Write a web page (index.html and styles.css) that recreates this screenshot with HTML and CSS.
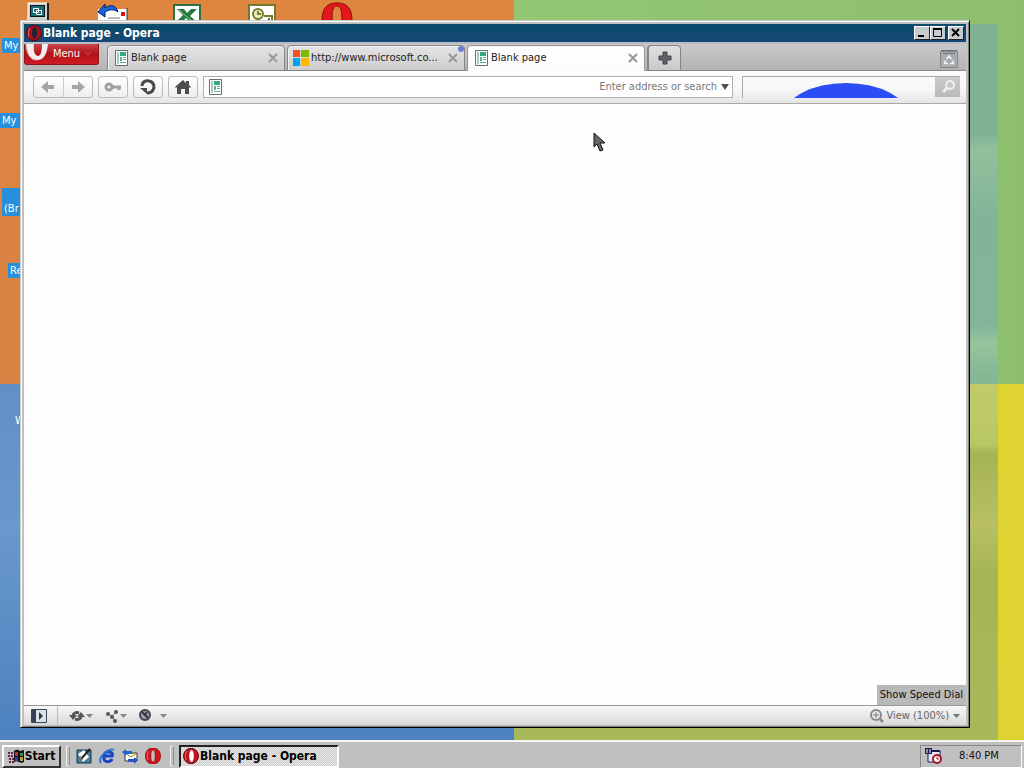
FILE: index.html
```html
<!DOCTYPE html>
<html lang="en">
<head>
    <meta charset="UTF-8">
    <meta name="viewport" content="width=device-width, initial-scale=1.0">
    <title>Blank page - Opera</title>
    <link rel="stylesheet" href="styles.css">
</head>
<body>
    <!-- Shared icons -->
    <svg class="sprite" aria-hidden="true">
        <symbol id="page" viewBox="0 0 13 16">
            <path d="M.5.5h12v15H.5z" fill="#fff" stroke="#60706c"/>
            <path d="M2 2h2v12H2z" fill="#a9c9be"/>
            <path d="M5 2h6v4H5z" fill="#35a68a"/>
            <path d="M5 7h2v4H5zM8 7h3v1H8zM8 9h3v1H8zM5 12h6v1H5z" fill="#5dae98"/>
        </symbol>
        <symbol id="opera" viewBox="0 0 16 16">
            <path fill-rule="evenodd" d="M8 0c5 0 7.500 3.500 7.500 8S13 16 8 16 .5 12.500.5 8 3 0 8 0zM8 2C6.300 2 5.800 4 5.800 8S6.300 14 8 14s2.200-2 2.200-6S9.700 2 8 2z" fill="#d3141c" stroke="#7d0508" stroke-width=".7"/>
            <path d="M4 3C2 5 2 9 3 12" fill="none" stroke="#f46a6a"/>
        </symbol>
        <symbol id="opera-dark" viewBox="0 0 16 16">
            <ellipse cx="8" cy="8" rx="7.500" ry="7.700" fill="#a80f16" stroke="#5b080f"/>
            <ellipse cx="8.500" cy="8" rx="2.500" ry="6" fill="#1d2536"/>
            <path d="M4 3C2 6 2 9 3 12" fill="none" stroke="#ee6b70"/>
        </symbol>
        <symbol id="opera-task" viewBox="0 0 16 16">
            <ellipse cx="8" cy="8" rx="7.500" ry="7.700" fill="#c3141b" stroke="#6c0a0f"/>
            <ellipse cx="8.500" cy="8" rx="2.300" ry="6" fill="#fff"/>
            <path d="M4 3C2 6 2 9 3 12" fill="none" stroke="#ee6b70"/>
        </symbol>
        <symbol id="close" viewBox="0 0 10 10">
            <path d="M1 1l8 8M9 1L1 9" stroke="#999" stroke-width="2"/>
        </symbol>
    </svg>

    <main class="desktop">
        <svg class="shortcut" style="left:27px" width="22" height="21" viewBox="0 0 22 21">
            <path d="M1 3h20v18H1z" fill="#c9d3cf"/>
            <path d="M1 21V3h19" fill="none" stroke="#fff"/>
            <path d="M21 3v18" stroke="#222" stroke-width="2"/>
            <path d="M3 5h15v12H3z" fill="#111"/>
            <path d="M4 6h13v10H4z" fill="#176d76"/>
            <path d="M6.500 8.500h5v4h-5zM9.500 10.500h5v4h-5z" fill="#176d76" stroke="#fff"/>
        </svg>
        <svg class="shortcut" style="left:96px" width="32" height="21" viewBox="0 0 32 21">
            <path d="M2 9h29v12H2z" fill="#fff"/>
            <path d="M31 8v13" stroke="#333"/>
            <path d="M25 12h4v4h-4z" fill="#d21414"/>
            <path d="M12 18h12" stroke="#777"/>
            <path d="M2 12l7-8v4c6-4 11-3 13 4-4-3-8-3-13 0v5z" fill="#1768dd" stroke="#0a1970"/>
        </svg>
        <svg class="shortcut" style="left:173px" width="28" height="21" viewBox="0 0 28 21">
            <path d="M1 5h26v16H1z" fill="#fff" stroke="#2f7040" stroke-width="2"/>
            <path d="M4 9h7l3 4 4-4h6l-7 7 7 6h-7l-4-4-4 4H3l7-7z" fill="#267a3c"/>
            <path d="M6 10l14 12" stroke="#8fc79a"/>
        </svg>
        <svg class="shortcut" style="left:248px" width="28" height="21" viewBox="0 0 28 21">
            <path d="M1 5h26v16H1z" fill="#fff" stroke="#727929" stroke-width="2"/>
            <circle cx="10" cy="14" r="5" fill="#eff0c3" stroke="#777b2d" stroke-width="2"/>
            <path d="M10 11v3h3M16 16h8v5h-3v-3" fill="none" stroke="#777b2d" stroke-width="2"/>
        </svg>
        <svg class="shortcut" style="left:321px" width="32" height="21" viewBox="0 0 32 21">
            <path fill-rule="evenodd" d="M1 21C1 8 6 3 16 3s15 5 15 18zM11 21C11 10 12 6 16 6s5 4 5 15z" fill="#e5181b" stroke="#8c0d0d"/>
        </svg>

        <span class="label" style="left:2px;top:38px">My</span>
        <span class="label" style="left:0;top:113px">My</span>
        <span class="label two-line" style="left:2px;top:188px">(Br</span>
        <span class="label" style="left:8px;top:263px">Re</span>
        <span class="label plain" style="left:13px;top:413px">W</span>

        <section class="window">
            <header class="titlebar">
                <svg width="16" height="16"><use href="#opera-dark"/></svg>
                <h1>Blank page - Opera</h1>
                <button class="caption" aria-label="Minimize"><svg width="14" height="12"><path d="M3 9h6" stroke="#000" stroke-width="2"/></svg></button>
                <button class="caption" aria-label="Maximize"><svg width="14" height="12"><path d="M2.500 2v7.500h8V2M2 2.500h9M2 1.500h9" fill="none" stroke="#000"/></svg></button>
                <button class="caption last" aria-label="Close"><svg width="14" height="12"><path d="M3 2l7 7M10 2L3 9" stroke="#000" stroke-width="2"/></svg></button>
            </header>

            <nav class="tabbar">
                <button class="menu">
                    <svg width="24" height="18" viewBox="0 0 24 18">
                        <path d="M1 0C2 10 5 16 12 16 19 16 22 10 23 0h-6c0 7-1 12-4 12S8 7 9 0z" fill="#f5eeee"/>
                        <path d="M1 0C2 10 5 16 12 16" fill="none" stroke="#cdbcbc"/>
                    </svg>
                    <span>Menu</span>
                    <svg width="8" height="6"><path d="M1 1l3 3 3-3" fill="none" stroke="#cb5557"/></svg>
                </button>
                <div class="tab">
                    <svg width="13" height="16"><use href="#page"/></svg>
                    <span>Blank page</span>
                    <button class="close" aria-label="Close tab"><svg width="10" height="10"><use href="#close"/></svg></button>
                </div>
                <div class="tab site">
                    <svg width="16" height="16">
                        <path d="M0 0h7v7H0z" fill="#f05022"/><path d="M8 0h8v7H8z" fill="#7eb900"/>
                        <path d="M0 8h7v8H0z" fill="#00a3ee"/><path d="M8 8h8v8H8z" fill="#ffb800"/>
                    </svg>
                    <span>http://www.microsoft.co...</span>
                    <button class="close" aria-label="Close tab"><svg width="10" height="10"><use href="#close"/></svg></button>
                    <i class="unread"></i>
                </div>
                <div class="tab active">
                    <svg width="13" height="16"><use href="#page"/></svg>
                    <span>Blank page</span>
                    <button class="close" aria-label="Close tab"><svg width="10" height="10"><use href="#close"/></svg></button>
                </div>
                <button class="new-tab" aria-label="New tab"><svg width="14" height="14"><path d="M5 1h4v4h4v4H9v4H5V9H1V5h4z" fill="#64606a" stroke="#444"/></svg></button>
                <button class="trash" aria-label="Closed tabs">
                    <svg width="18" height="18">
                        <path d="M.5 1.500h17v16H.5z" fill="#a9adb0" stroke="#81868a"/>
                        <path d="M1 .5h16M3 3.500h12" stroke="#70757a"/>
                        <path d="M6.500 9L9 6l2.500 3M12.500 10.500l1 3H10M8 13.500H4.500l1-3" fill="none" stroke="#f4f4f4" stroke-width="1.500"/>
                    </svg>
                </button>
            </nav>

            <div class="toolbar">
                <div class="history">
                    <button aria-label="Back"><svg width="16" height="14"><path d="M1 7l7-6v4h6v4H8v4z" fill="#a5a5a5"/></svg></button>
                    <button aria-label="Forward"><svg width="16" height="14"><path d="M15 7L8 1v4H2v4h6v4z" fill="#a5a5a5"/></svg></button>
                </div>
                <button aria-label="Wand"><svg width="18" height="12"><circle cx="5" cy="6" r="3" fill="none" stroke="#a0a0a0" stroke-width="3"/><path d="M8 6h9M15 6v3" stroke="#a0a0a0" stroke-width="3"/></svg></button>
                <button aria-label="Reload"><svg width="18" height="18"><path d="M3 8c0-4 4-6 7-5 5 1 6 6 4 9-1 2-3 3-6 3" fill="none" stroke="#4b4b4b" stroke-width="3"/><path d="M1 10h7v6z" fill="#4b4b4b"/></svg></button>
                <button aria-label="Home"><svg width="18" height="16"><path d="M1 8l8-7 3 3V2h3v4l2 2-1 1-1-1v7h-4v-5H7v5H3V8L2 9z" fill="#4d4d4d"/></svg></button>
                <div class="address">
                    <svg width="13" height="16"><use href="#page"/></svg>
                    <input type="text" aria-label="Address" placeholder="Enter address or search">
                    <button aria-label="Show history"><svg width="8" height="6"><path d="M0 0h8L4 6z" fill="#4f4f4f"/></svg></button>
                </div>
                <div class="search">
                    <svg class="search-logo" width="106" height="15" viewBox="0 0 106 15"><ellipse cx="53" cy="33" rx="62" ry="33" fill="#2b4ef4"/></svg>
                    <input type="search" aria-label="Search">
                    <button aria-label="Search"><svg width="22" height="18"><circle cx="13" cy="7" r="4" fill="#c9c9c9" stroke="#eee" stroke-width="2"/><path d="M10 10l-4 4" stroke="#eee" stroke-width="3"/></svg></button>
                </div>
            </div>

            <div class="page">
                <button class="speed-dial">Show Speed Dial</button>
            </div>

            <footer class="statusbar">
                <button class="panel" aria-label="Panels"><svg width="17" height="14"><path d="M.5.5h15v13H.5z" fill="#dce2e8" stroke="#3a4556"/><path d="M1 1h4v12H1z" fill="#35415b"/><path d="M8 3l4 4-4 4z" fill="#303947"/></svg></button>
                <button class="drop" aria-label="Synchronize">
                    <svg width="16" height="14"><path d="M4 7c0-3 3-4 6-3M12 7c0 3-3 4-6 3" fill="none" stroke="#555" stroke-width="3"/><path d="M0 6h8l-4 5zM8 8h8l-4-5z" fill="#555"/></svg>
                    <svg width="7" height="4"><path d="M0 0h7L3.500 4z" fill="#858585"/></svg>
                </button>
                <button class="drop" aria-label="Unite">
                    <svg width="14" height="14"><path d="M2 4l5 3 4-4M7 7l3 5" fill="none" stroke="#777"/><circle cx="3" cy="5" r="2"/><circle cx="7" cy="8" r="2"/><circle cx="11" cy="3" r="2"/><circle cx="10" cy="12" r="2"/></svg>
                    <svg width="7" height="4"><path d="M0 0h7L3.500 4z" fill="#858585"/></svg>
                </button>
                <button class="drop turbo" aria-label="Turbo">
                    <svg width="13" height="13"><circle cx="6" cy="6" r="5" fill="#9a9da4" stroke="#3f444e" stroke-width="2"/><path d="M3 3l6 6M8 3L6 6" stroke="#303540" stroke-width="2"/></svg>
                    <svg width="7" height="4"><path d="M0 0h7L3.500 4z" fill="#858585"/></svg>
                </button>
                <button class="drop zoom">
                    <svg width="14" height="14"><circle cx="6" cy="6" r="5" fill="#e9e9e9" stroke="#8a8a8a" stroke-width="2"/><path d="M3 6h6M6 3v6" stroke="#777"/><path d="M10 10l3 3" stroke="#8a8a8a" stroke-width="3"/></svg>
                    <span>View (100%)</span>
                    <svg width="7" height="4"><path d="M0 0h7L3.500 4z" fill="#777"/></svg>
                </button>
            </footer>
        </section>

        <svg class="cursor" width="13" height="20" viewBox="0 0 13 20"><path d="M1 1v14l3-3 3 7 3-1-3-7h5z" fill="#666" stroke="#111"/></svg>
    </main>

    <footer class="taskbar">
        <button class="start">
            <svg width="17" height="15"><path d="M6 2c3-2 4-1 6 0l4-1v12c-2 1-3 1-5 0s-3-1-5 0z" fill="#111"/><path d="M7 3h3v4H7z" fill="#b43a37"/><path d="M12 4h3v3h-3z" fill="#389342"/><path d="M7 8h3v4H7z" fill="#2645bd"/><path d="M12 8h3v4h-3z" fill="#b9a53b"/><path d="M0 4h6M0 7h6M1 10h5M1 13h5" stroke="#6b1b5c" stroke-width="2" stroke-dasharray="2 1"/></svg>
            Start
        </button>
        <i class="grip"></i>
        <div class="quick">
            <a href="#" aria-label="Show desktop"><svg width="16" height="16"><path d="M1 2h14v13H1z" fill="#4a7f93" stroke="#163548"/><path d="M2 6l6-4 5 7-6 5z" fill="#fff"/><path d="M5 11L14 1" stroke="#222" stroke-width="2"/><path d="M4 8l3 4" stroke="#777"/></svg></a>
            <a href="#" aria-label="Internet Explorer"><svg width="16" height="16"><path d="M13 11c-1 3-7 4-8 0s1-8 5-7c3 0 4 2 3 4H6" fill="none" stroke="#1646c8" stroke-width="3"/><path d="M2 15C-2 9 11-1 15 2" fill="none" stroke="#2a74dc" stroke-width="2"/></svg></a>
            <a href="#" aria-label="Outlook Express"><svg width="16" height="16"><path d="M3 5h12v8H3z" fill="#fff" stroke="#333"/><path d="M3 5l6 4 6-4" fill="none" stroke="#777"/><path d="M0 4l4-3v2h6v3H4v2z" fill="#2464d0"/><path d="M16 12l-4 4v-2H6v-3h6V9z" fill="#2a54bc"/><path d="M10 6h3v2h-3z" fill="#e4ce3e"/></svg></a>
            <a href="#" aria-label="Opera"><svg width="16" height="16"><use href="#opera"/></svg></a>
        </div>
        <i class="grip"></i>
        <button class="task"><svg width="16" height="16"><use href="#opera-task"/></svg>Blank page - Opera</button>
        <div class="tray">
            <svg width="17" height="16"><path d="M3 3h12v11H3z" fill="#e8e8f0" stroke="#1b1b5a"/><path d="M0 0h7v6H0z" fill="#1b1b5a"/><path d="M1 2h2M4 2h2M1 4h2M4 4h2" stroke="#fff"/><path d="M7 3h8" stroke="#1b1b5a" stroke-width="2"/><circle cx="12" cy="11" r="4" fill="#fff" stroke="#a1122c" stroke-width="2"/><path d="M12 9v2h2" fill="none" stroke="#a1122c"/></svg>
            <time>8:40 PM</time>
        </div>
    </footer>
</body>
</html>
```
FILE: styles.css
```css
* {
    box-sizing: border-box;
}

body {
    display: flex;
    flex-direction: column;
    height: 100vh;
    margin: 0;
    overflow: hidden;
    font: 11px/14px "DejaVu Sans Condensed", "DejaVu Sans", sans-serif;
    color: #222;
}

button {
    display: flex;
    align-items: center;
    justify-content: center;
    margin: 0;
    padding: 0;
    border: 0;
    background: none;
    font: inherit;
    color: inherit;
}

svg {
    display: block;
    flex: none;
}

.sprite {
    position: absolute;
    width: 0;
    height: 0;
}

/* Wallpaper: four coloured quarters with a darker band on the right */
.desktop {
    position: relative;
    flex: 1;
    overflow: hidden;
    background:
        linear-gradient(178deg, #7fb292 0 110px, #93c09c 125px, #82b598 190px, #82b599 300px, #96c59d 320px, #86b795 350px) 970px 24px / 28px 360px no-repeat,
        linear-gradient(#c2cb68, #b9c862 60px, #a5b455 70px, #b8bf64 140px, #a6b655 190px, #a9b85b) 514px 384px / 484px 356px no-repeat,
        linear-gradient(#de853f, #d98344) 0 0 / 514px 384px no-repeat,
        linear-gradient(90deg, #93c774, #8dbd6d 60%, #93bf74) 514px 0 / 100% 384px no-repeat,
        linear-gradient(#618fc7, #6998cc 40%, #4c82bf) 0 384px / 514px 356px no-repeat,
        #dfd331;
}

.shortcut {
    position: absolute;
    top: 0;
}

.label {
    position: absolute;
    width: 24px;
    padding: 0 2px;
    background: #2690dc;
    color: #fff;
    line-height: 15px;
    white-space: nowrap;
}

.label.two-line {
    padding-top: 13px;
}

.label.plain {
    background: none;
}

/* Browser window */
.window {
    position: absolute;
    top: 20px;
    right: 54px;
    bottom: 12px;
    left: 20px;
    display: flex;
    flex-direction: column;
    padding: 3px 3px 2px;
    border: 1px solid #c5cbcb;
    border-right-color: #000;
    border-bottom-color: #000;
    background: #c0c0c0;
    box-shadow: inset 1px 1px #fff, inset -1px -1px #808080;
}

.titlebar {
    display: flex;
    align-items: center;
    height: 18px;
    padding: 0 2px;
    background: linear-gradient(#0d4b6c 40%, #174777);
    color: #fff;
}

.titlebar h1 {
    flex: 1;
    margin: 0 0 0 1px;
    font-size: 12px;
    line-height: 18px;
}

.caption {
    width: 16px;
    height: 14px;
    border: 1px solid #fff;
    border-right-color: #222;
    border-bottom-color: #222;
    background: #c5cdd1;
}

.caption.last {
    margin-left: 2px;
}

.tabbar {
    display: flex;
    align-items: flex-end;
    height: 29px;
    padding-right: 8px;
    border-top: 2px solid #b6bec4;
    background: linear-gradient(#c9c9c9, #b3b3b3);
    box-shadow: inset 0 -1px #888;
}

.menu {
    align-self: flex-start;
    gap: 3px;
    width: 75px;
    height: 21px;
    margin-right: 8px;
    padding-right: 6px;
    border: 1px solid #8c1519;
    border-top: 0;
    border-radius: 0 0 3px 3px;
    background: linear-gradient(#c7454b, #b31319 50%, #d01b22);
    color: #fff;
}

.menu svg:first-child {
    align-self: flex-start;
}

.menu span {
    flex: 1;
}

.tab {
    position: relative;
    display: flex;
    align-items: center;
    gap: 3px;
    flex: 0 1 178px;
    min-width: 0;
    height: 26px;
    margin-right: 2px;
    padding: 0 6px 0 7px;
    border: 1px solid #868686;
    border-radius: 4px 4px 0 0;
    background: linear-gradient(#e4e4e4, #cdcdcd);
    box-shadow: inset 1px 1px #f2f2f2;
}

.tab span {
    flex: 1;
    overflow: hidden;
    white-space: nowrap;
}

.tab.site {
    gap: 2px;
    padding-left: 5px;
}

.tab.active {
    border-color: #999;
    border-bottom-color: #fcfcfc;
    background: linear-gradient(#fff, #fcfcfc);
}

.unread {
    position: absolute;
    top: 0;
    right: 0;
    width: 6px;
    height: 6px;
    border-radius: 3px;
    background: #6d7fce;
}

.new-tab {
    width: 34px;
    height: 26px;
    border: 1px solid #858585;
    border-left-width: 2px;
    border-radius: 4px 4px 0 0;
    background: linear-gradient(#e0e0e0, #c9c9c9);
}

.trash {
    margin: 0 0 3px auto;
}

.toolbar {
    display: flex;
    align-items: center;
    gap: 5px;
    height: 33px;
    padding: 0 6px 0 9px;
    border-bottom: 1px solid #aaa;
    background: linear-gradient(#fcfcfc, #f6f6f6 60%, #e4e4e4);
}

.toolbar > button,
.history {
    flex: none;
    width: 30px;
    height: 22px;
    border: 1px solid #bbb;
    border-radius: 3px;
    background: linear-gradient(#fff, #eee);
}

.history {
    display: flex;
    width: 60px;
}

.history button {
    flex: 1;
}

.history button + button {
    border-left: 1px solid #ccc;
}

.address {
    display: flex;
    align-items: center;
    gap: 4px;
    flex: 1;
    height: 22px;
    padding: 0 3px 0 5px;
    border: 1px solid #b0b0b0;
    background: #fff;
}

input {
    flex: 1;
    min-width: 0;
    padding: 0;
    border: 0;
    outline: 0;
    background: none;
    font: inherit;
}

.address input {
    text-align: right;
}

.address input::placeholder {
    color: #777;
    opacity: 1;
}

.search {
    position: relative;
    display: flex;
    flex: 0 1 218px;
    height: 22px;
    margin-left: 4px;
    border-top: 1px solid #aaa;
    border-left: 1px solid #aaa;
}

.search-logo {
    position: absolute;
    right: 61px;
    bottom: 0;
}

.search button {
    width: 25px;
    height: 20px;
    background: linear-gradient(#ccc, #b9b9b9);
}

.page {
    display: flex;
    flex: 1;
    align-items: flex-end;
    justify-content: flex-end;
    background: #fefefe;
}

.speed-dial {
    height: 20px;
    padding: 0 3px;
    background: #b9b9b9;
    color: #111;
}

.statusbar {
    display: flex;
    align-items: center;
    height: 20px;
    padding: 0 6px 0 7px;
    border-top: 1px solid #999;
    background: linear-gradient(#f8f8f8, #d9d9d9);
}

.panel {
    width: 27px;
    height: 19px;
    margin-right: 11px;
    justify-content: flex-start;
    border-right: 1px solid #bbb;
}

.drop {
    gap: 1px;
    margin-right: 12px;
    fill: #555;
}

.turbo {
    gap: 8px;
}

.zoom {
    gap: 2px;
    margin: 0 0 0 auto;
    color: #666;
}

.zoom span {
    margin-right: 2px;
}

.cursor {
    position: absolute;
    top: 132px;
    left: 593px;
}

/* Taskbar */
.taskbar {
    display: flex;
    align-items: center;
    gap: 5px;
    height: 28px;
    padding: 2px 2px 0;
    border-top: 2px solid #f4f4f4;
    background: #c0c0c0;
}

.start,
.task {
    height: 23px;
    border: 2px solid #fff;
    border-right-color: #333;
    border-bottom-color: #333;
    font-size: 12px;
    font-weight: bold;
    color: #000;
}

.start {
    width: 59px;
}

.grip {
    width: 4px;
    height: 20px;
    border: 1px solid #eee;
    border-right-color: #888;
}

.quick {
    display: flex;
    gap: 7px;
    margin: 0 4px 0 1px;
}

.task {
    flex: 0 1 160px;
    justify-content: flex-start;
    gap: 1px;
    padding-left: 2px;
    border-color: #222 #fff #fff #222;
    background: repeating-conic-gradient(#ccc 0 25%, #e6e6e6 0 50%) 0 0 / 2px 2px;
}

.tray {
    display: flex;
    align-items: center;
    gap: 17px;
    width: 102px;
    height: 23px;
    margin-left: auto;
    padding: 0 4px;
    border: 1px solid #888;
    border-right-color: #fff;
    border-bottom-color: #fff;
    color: #111;
}
```
